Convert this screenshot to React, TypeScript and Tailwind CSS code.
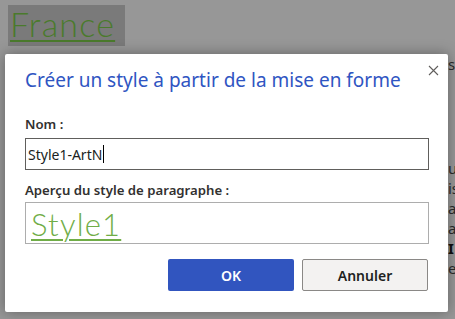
import React from "react";

const ui = { fontFamily: '"Noto Sans", "Open Sans", sans-serif' };
const deco = { fontFamily: 'Lato, "DejaVu Sans", sans-serif' };

export default function App() {
  return (
    <div className="relative h-[319px] w-[455px] overflow-hidden bg-[#979797]" style={ui}>
      {/* document behind the dialog */}
      <div className="flex h-full">
        <div className="flex-1 pl-2 pt-[5px]">
          <div className="inline-block h-[41px] w-[117px] bg-[#7a7a7a] pl-[2px]">
            <span
              className="text-[34px] font-light leading-[38px] tracking-[1.2px] text-[#4a7a2c] underline decoration-2 underline-offset-[3px]"
              style={deco}
            >
              France
            </span>
          </div>
        </div>
        <div className="flex w-[7px] flex-col pt-[54px] text-[15px] leading-[20px] text-[#2c2c2c]">
          <span>s</span>
          <span className="mt-[84px]">u</span>
          <span>is</span>
          <span>a</span>
          <span>a</span>
          <span className="font-bold text-[#111]">I</span>
          <span>e</span>
        </div>
      </div>

      {/* dialog */}
      <div className="absolute left-[5px] top-[54px] h-[258px] w-[443px] rounded-[2px] bg-white shadow-[0_0_14px_rgba(0,0,0,0.35)]">
        <div className="flex items-start justify-between pl-5 pr-[5px] pt-[12px]">
          <h1 className="text-[19px] leading-[28px] text-[#2f55c2]">Créer un style à partir de la mise en forme</h1>
          <button className="-mt-[6px] flex h-5 w-5 items-center justify-center text-[#605e5c]">
            <svg width="11" height="11" viewBox="0 0 11 11">
              <path d="M1 1L10 10M10 1L1 10" stroke="currentColor" strokeWidth="1.1" />
            </svg>
          </button>
        </div>

        <div className="flex flex-col px-5 pt-[21px]">
          <label className="text-[13.2px] font-semibold leading-[18px] text-[#323130]">Nom :</label>
          <div className="mt-[5px] flex h-[32px] w-[404px] items-center border border-[#605e5c] pl-[2px] text-[14px] text-[#201f1e]">
            Style1-ArtN<span className="ml-[1px] h-[18px] w-px bg-black" />
          </div>
          <label className="mt-[11px] text-[13.2px] font-semibold leading-[18px] text-[#323130]">Aperçu du style de paragraphe :</label>
          <div className="mt-[3px] flex h-[42px] w-[404px] items-end border border-[#adadad] pb-[2px] pl-[5px]">
            <span
              className="text-[31px] font-light leading-[34px] tracking-[1.2px] text-[#70ad47] underline decoration-2 underline-offset-[3px]"
              style={deco}
            >
              Style1
            </span>
          </div>
          <div className="mt-[15px] flex justify-end gap-2">
            <button className="h-[32px] w-[126px] rounded-[2px] bg-[#3155bf] text-[14px] font-semibold text-white">OK</button>
            <button className="h-[32px] w-[126px] rounded-[2px] border border-[#8a8886] bg-[#f3f2f1] text-[14px] font-semibold text-[#201f1e]">
              Annuler
            </button>
          </div>
        </div>
      </div>
    </div>
  );
}
